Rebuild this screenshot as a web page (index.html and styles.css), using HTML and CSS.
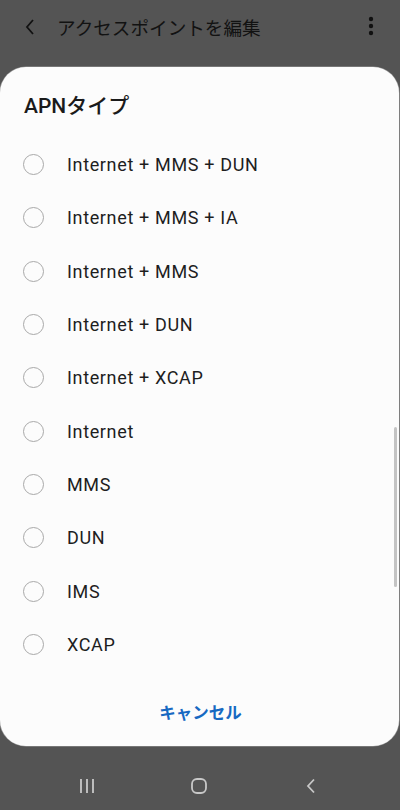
FILE: index.html
```html
<!DOCTYPE html>
<html lang="ja">
<head>
<meta charset="utf-8">
<link rel="stylesheet" href="styles.css">
</head>
<body>
<div class="screen">
  <header class="appbar">
    <svg class="back" width="12" height="18" viewBox="0 0 12 18"><path d="M9 2 L3 9 L9 16" fill="none" stroke="#111" stroke-width="1.8"/></svg>
    <div class="apptitle">アクセスポイントを編集</div>
    <svg class="more" width="6" height="20" viewBox="0 0 6 20"><circle cx="3" cy="3" r="2.2" fill="#111"/><circle cx="3" cy="10" r="2.2" fill="#111"/><circle cx="3" cy="17" r="2.2" fill="#111"/></svg>
  </header>
  <section class="dialog">
    <div class="scrollbar"></div>
    <h2 class="dtitle">APNタイプ</h2>
    <ul class="options">
      <li class="opt"><span class="radio"></span><span class="label">Internet + MMS + DUN</span></li>
      <li class="opt"><span class="radio"></span><span class="label">Internet + MMS + IA</span></li>
      <li class="opt"><span class="radio"></span><span class="label">Internet + MMS</span></li>
      <li class="opt"><span class="radio"></span><span class="label">Internet + DUN</span></li>
      <li class="opt"><span class="radio"></span><span class="label">Internet + XCAP</span></li>
      <li class="opt"><span class="radio"></span><span class="label">Internet</span></li>
      <li class="opt"><span class="radio"></span><span class="label">MMS</span></li>
      <li class="opt"><span class="radio"></span><span class="label">DUN</span></li>
      <li class="opt"><span class="radio"></span><span class="label">IMS</span></li>
      <li class="opt"><span class="radio"></span><span class="label">XCAP</span></li>
    </ul>
    <div class="actions"><span class="cancel">キャンセル</span></div>
  </section>
  <nav class="navbar">
    <span class="navbtn"><svg width="16" height="16" viewBox="0 0 16 16"><path d="M2 1v14M8 1v14M14 1v14" stroke="#c8c8c8" stroke-width="1.8" fill="none"/></svg></span>
    <span class="navbtn"><svg width="16" height="16" viewBox="0 0 16 16"><rect x="1" y="1" width="14" height="14" rx="5" stroke="#c8c8c8" stroke-width="1.8" fill="none"/></svg></span>
    <span class="navbtn"><svg width="10" height="16" viewBox="0 0 10 16"><path d="M8 1.5 L2 8 L8 14.5" stroke="#c8c8c8" stroke-width="1.8" fill="none"/></svg></span>
  </nav>
</div>
</body>
</html>
```
FILE: styles.css
```css
* { box-sizing: border-box; }
html, body { margin: 0; padding: 0; }
body {
  background: #545454;
  font-family: Roboto, "Noto Sans CJK JP", sans-serif;
  width: 400px;
  height: 810px;
  overflow: hidden;
}
.screen { display: flex; flex-direction: column; height: 810px; }
.appbar {
  height: 56px;
  display: flex;
  align-items: center;
  padding: 0 26px 0 24px;
}
.back { margin-top: -2px; }
.apptitle {
  flex: 1;
  margin-left: 21px;
  font-family: "Noto Sans CJK JP", sans-serif;
  font-size: 18.6px;
  color: #121212;
  margin-top: -3px;
}
.more { margin-top: -4px; }
.dialog {
  position: relative;
  margin: 11px 1px 0 0;
  background: #fcfcfc;
  border-radius: 26px;
  padding: 27px 0 10px;
  box-shadow: 0 0 0 0.6px #9a9a9a;
}
.scrollbar {
  position: absolute;
  right: 2px;
  top: 360px;
  width: 3px;
  height: 160px;
  border-radius: 2px;
  background: #c4c4c4;
}
.dtitle {
  margin: 0;
  padding-left: 24px;
  font-size: 21px;
  line-height: 24px;
  font-weight: 500;
  color: #1a1a1a;
  font-family: Roboto, "Noto Sans CJK JP", sans-serif;
}
.options { list-style: none; margin: 20px 0 0; padding: 0; }
.opt {
  height: 53.33px;
  display: flex;
  align-items: center;
  padding-left: 23px;
}
.radio {
  width: 21px;
  height: 21px;
  border-radius: 50%;
  border: 1.6px solid #a9a9a9;
  flex: none;
}
.label {
  margin-left: 23px;
  font-size: 18px;
  letter-spacing: 0.65px;
  color: #1e1e1e;
}
.actions {
  margin-top: 17px;
  height: 48px;
  display: flex;
  align-items: center;
  justify-content: center;
}
.cancel {
  font-family: "Noto Sans CJK JP", sans-serif;
  font-weight: 700;
  font-size: 16.5px;
  color: #1769c2;
  margin-left: 2px;
}
.navbar {
  flex: 1;
  display: flex;
  align-items: flex-start;
  padding: 32px 0 0 31px;
}
.navbtn {
  width: 112px;
  display: flex;
  justify-content: center;
}
```
